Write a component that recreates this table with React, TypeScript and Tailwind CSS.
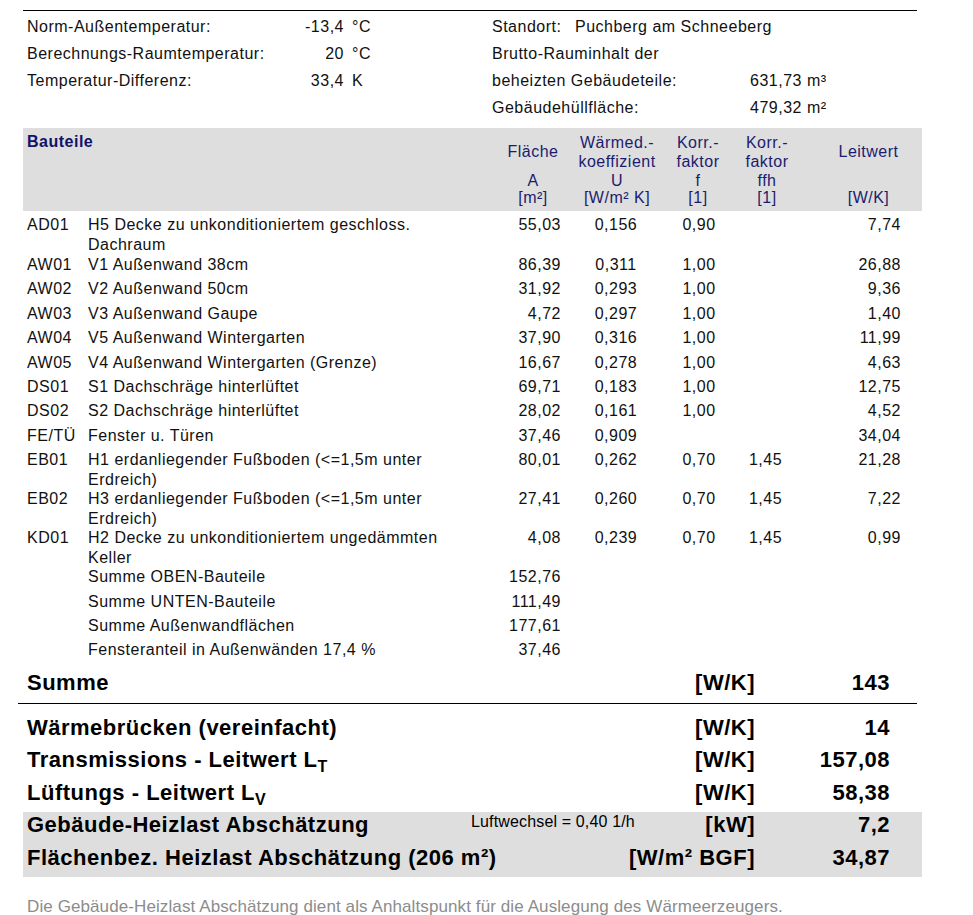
import React from 'react';

type Row = { code?: string; name: string; a: string; u?: string; f?: string; ffh?: string; lw?: string; tall?: boolean };

const rows: Row[] = [
  { code: 'AD01', name: 'H5 Decke zu unkonditioniertem geschloss. Dachraum', a: '55,03', u: '0,156', f: '0,90', lw: '7,74', tall: true },
  { code: 'AW01', name: 'V1 Außenwand 38cm', a: '86,39', u: '0,311', f: '1,00', lw: '26,88' },
  { code: 'AW02', name: 'V2 Außenwand 50cm', a: '31,92', u: '0,293', f: '1,00', lw: '9,36' },
  { code: 'AW03', name: 'V3 Außenwand Gaupe', a: '4,72', u: '0,297', f: '1,00', lw: '1,40' },
  { code: 'AW04', name: 'V5 Außenwand Wintergarten', a: '37,90', u: '0,316', f: '1,00', lw: '11,99' },
  { code: 'AW05', name: 'V4 Außenwand Wintergarten (Grenze)', a: '16,67', u: '0,278', f: '1,00', lw: '4,63' },
  { code: 'DS01', name: 'S1 Dachschräge hinterlüftet', a: '69,71', u: '0,183', f: '1,00', lw: '12,75' },
  { code: 'DS02', name: 'S2 Dachschräge hinterlüftet', a: '28,02', u: '0,161', f: '1,00', lw: '4,52' },
  { code: 'FE/TÜ', name: 'Fenster u. Türen', a: '37,46', u: '0,909', lw: '34,04' },
  { code: 'EB01', name: 'H1 erdanliegender Fußboden (<=1,5m unter Erdreich)', a: '80,01', u: '0,262', f: '0,70', ffh: '1,45', lw: '21,28', tall: true },
  { code: 'EB02', name: 'H3 erdanliegender Fußboden (<=1,5m unter Erdreich)', a: '27,41', u: '0,260', f: '0,70', ffh: '1,45', lw: '7,22', tall: true },
  { code: 'KD01', name: 'H2 Decke zu unkonditioniertem ungedämmten Keller', a: '4,08', u: '0,239', f: '0,70', ffh: '1,45', lw: '0,99', tall: true },
  { name: 'Summe OBEN-Bauteile', a: '152,76' },
  { name: 'Summe UNTEN-Bauteile', a: '111,49' },
  { name: 'Summe Außenwandflächen', a: '177,61' },
  { name: 'Fensteranteil in Außenwänden 17,4 %', a: '37,46' },
];

const cols = 'grid grid-cols-[65px_415px_60px_108px_54px_84px_113px]';

function BigRow({ label, unit, value, note, h = 'h-[32.5px]' }: { label: React.ReactNode; unit: string; value: string; note?: string; h?: string }) {
  return (
    <div className={`grid grid-cols-[440px_288px_135px] ${h} items-center pl-[4px] text-[22px] leading-[26px] font-bold tracking-[0.5px] text-black`}>
      <div className="whitespace-nowrap">{label}</div>
      <div className="flex items-center justify-between self-stretch">
        <span className="self-start mt-[1px] leading-[18px] text-[16px] font-normal tracking-[0.15px] ml-[4px]">{note}</span>
        <span className="whitespace-nowrap">{unit}</span>
      </div>
      <div className="text-right">{value}</div>
    </div>
  );
}

const Sub = ({ children }: { children: React.ReactNode }) => (
  <span className="relative top-[5px] text-[16px] leading-none">{children}</span>
);

export default function App() {
  return (
    <div className="w-[973px] h-[915px] bg-white font-['Liberation_Sans',Arial,sans-serif] text-[#111] overflow-hidden">
      <div className="pt-[10px] pl-[23px] w-[922px]">
        {/* Kopfdaten */}
        <div className="border-t border-black w-[894px] pt-[2px] grid grid-cols-[469px_425px] text-[16px] tracking-[0.5px] leading-[27px]">
          <div>
            <div className="grid grid-cols-[262px_55px_auto] pl-[4px]"><span>Norm-Außentemperatur:</span><span className="text-right">-13,4</span><span className="pl-[8px]">°C</span></div>
            <div className="grid grid-cols-[262px_55px_auto] pl-[4px]"><span>Berechnungs-Raumtemperatur:</span><span className="text-right">20</span><span className="pl-[8px]">°C</span></div>
            <div className="grid grid-cols-[262px_55px_auto] pl-[4px]"><span>Temperatur-Differenz:</span><span className="text-right">33,4</span><span className="pl-[8px]">K</span></div>
          </div>
          <div>
            <div className="flex"><span className="w-[83px]">Standort:</span><span>Puchberg am Schneeberg</span></div>
            <div>Brutto-Rauminhalt der</div>
            <div className="flex"><span className="w-[258px]">beheizten Gebäudeteile:</span><span>631,73 m³</span></div>
            <div className="flex"><span className="w-[258px]">Gebäudehüllfläche:</span><span>479,32 m²</span></div>
          </div>
        </div>

        {/* Tabellenkopf */}
        <div className={`${cols} mt-[7px] bg-[#dedede] h-[83px] pt-[4px] text-[16px] tracking-[0.5px] text-[#1c1c6e] text-center`}>
          <div className="text-left pl-[4px] font-bold text-[#12126a] leading-[19px] col-span-2">Bauteile</div>
          <div className="flex flex-col">
            <div className="h-[38px] flex items-center justify-center pt-[2px]">Fläche</div>
            <div className="leading-[17px] mt-[2px]">A</div>
            <div className="leading-[17px]">[m²]</div>
          </div>
          <div className="flex flex-col">
            <div className="h-[38px] leading-[19px] pt-[1px]">Wärmed.-<br />koeffizient</div>
            <div className="leading-[17px] mt-[2px]">U</div>
            <div className="leading-[17px]">[W/m² K]</div>
          </div>
          <div className="flex flex-col">
            <div className="h-[38px] leading-[19px] pt-[1px]">Korr.-<br />faktor</div>
            <div className="leading-[17px] mt-[2px]">f</div>
            <div className="leading-[17px]">[1]</div>
          </div>
          <div className="flex flex-col">
            <div className="h-[38px] leading-[19px] pt-[1px]">Korr.-<br />faktor</div>
            <div className="leading-[17px] mt-[2px]">ffh</div>
            <div className="leading-[17px]">[1]</div>
          </div>
          <div className="flex flex-col pl-[6px]">
            <div className="h-[38px] flex items-center justify-center pt-[2px]">Leitwert</div>
            <div className="leading-[17px] mt-[2px]">&nbsp;</div>
            <div className="leading-[17px]">[W/K]</div>
          </div>
        </div>

        {/* Bauteile */}
        <div className="text-[16px] tracking-[0.5px] leading-[20px]">
          {rows.map((r, i) => (
            <div key={i} className={`${cols} pt-[4px] ${r.tall ? (i === 0 ? 'h-[40px]' : 'h-[39px]') : 'h-[24.4px]'}`}>
              <div className="pl-[4px]">{r.code}</div>
              <div className="pr-[20px]">{r.name}</div>
              <div className="text-right pr-[2px]">{r.a}</div>
              <div className="text-center pr-[2px]">{r.u}</div>
              <div className="text-center pl-[2px]">{r.f}</div>
              <div className="text-center pr-[3px]">{r.ffh}</div>
              <div className="text-right pr-[21px]">{r.lw}</div>
            </div>
          ))}
        </div>

        {/* Summe */}
        <div className="grid grid-cols-[440px_288px_135px] h-[42px] pt-[2px] items-center pl-[4px] text-[22px] leading-[26px] font-bold tracking-[0.5px] text-black">
          <div>Summe</div>
          <div className="text-right">[W/K]</div>
          <div className="text-right">143</div>
        </div>
        <div className="border-t border-black w-[899px] -ml-[5px]" />

        <div className="mt-[8px]">
          <BigRow label="Wärmebrücken (vereinfacht)" unit="[W/K]" value="14" />
          <BigRow label={<>Transmissions - Leitwert L<Sub>T</Sub></>} unit="[W/K]" value="157,08" />
          <BigRow label={<>Lüftungs - Leitwert L<Sub>V</Sub></>} unit="[W/K]" value="58,38" />
          <div className="bg-[#dedede] w-[899px] mt-[2.5px] pb-[2.5px]">
            <div className="pb-[3px]">
              <BigRow label="Gebäude-Heizlast Abschätzung" unit="[kW]" value="7,2" note="Luftwechsel = 0,40 1/h" h="h-[27px]" />
            </div>
            <BigRow label="Flächenbez. Heizlast Abschätzung (206 m²)" unit="[W/m² BGF]" value="34,87" />
          </div>
        </div>

        <div className="mt-[20px] pl-[4px] text-[17px] leading-[20px] tracking-[0.1px] text-[#8c8c8c]">
          Die Gebäude-Heizlast Abschätzung dient als Anhaltspunkt für die Auslegung des Wärmeerzeugers.
        </div>
      </div>
    </div>
  );
}
